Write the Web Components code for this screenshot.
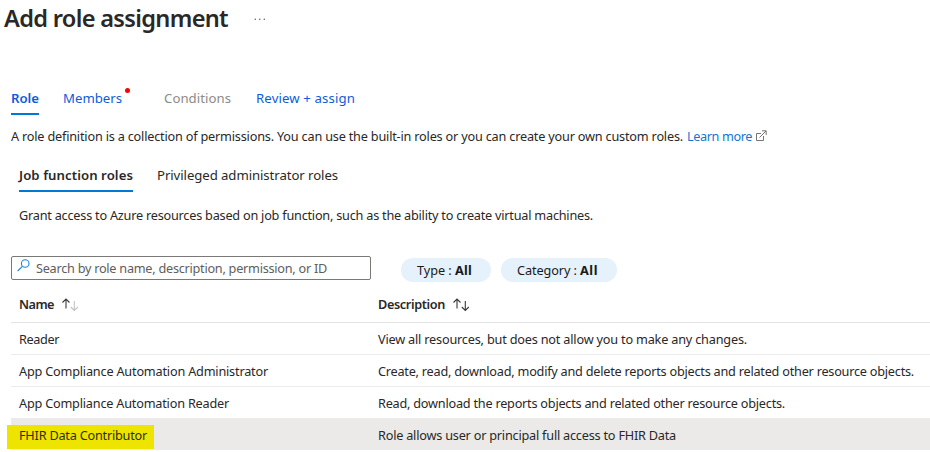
<!DOCTYPE html>
<html lang="en">
<head>
<meta charset="utf-8">
<title>Add role assignment</title>
<style>
html,body{margin:0;background:#fff}
body{width:930px;height:452px;overflow:hidden;font:12.7px/18px "Noto Sans","Open Sans",sans-serif;color:#292827}
</style>
</head>
<body>
<role-page></role-page>
<script>
// Single line of text whose tracking is set so that it spans `w` pixels.
class TextLine extends HTMLElement {
  connectedCallback() {
    if (this.shadowRoot) return;
    this.attachShadow({mode:'open'}).innerHTML =
      '<style>:host{display:inline-block;white-space:pre;flex:none}span{display:inline-block}</style><span><slot></slot></span>';
    const w = +this.getAttribute('w'), s = this.shadowRoot.querySelector('span');
    const n = this.textContent.length;
    if (w) {
      const natural = s.getBoundingClientRect().width;
      s.style.letterSpacing = ((w - natural) / n).toFixed(4) + 'px';
      this.style.width = w + 'px';
    }
  }
}
customElements.define('text-line', TextLine);

class TabItem extends HTMLElement {
  connectedCallback() {
    this.attachShadow({mode:'open'}).innerHTML = `<style>
      :host{display:block;position:relative;box-sizing:border-box;height:26px;color:var(--tab,#0f5bdc);border-bottom:2px solid transparent;font-size:13.2px}
      :host([active]){font-weight:600;border-color:#0078d4}
      :host([disabled]){color:#8d8b89}
      i{display:none}
      :host([dot]) i{display:block;position:absolute;left:62px;top:-1px;width:5px;height:5px;border-radius:50%;background:#f00}
    </style><slot></slot><i></i>`;
  }
}
customElements.define('tab-item', TabItem);

class SortArrows extends HTMLElement {
  connectedCallback() {
    const down = this.hasAttribute('asc') ? '#c4c2c0' : '#3b3a39';
    this.attachShadow({mode:'open'}).innerHTML = `<style>:host{display:block;height:14px}svg{display:block}</style>
      <svg width="17" height="14" viewBox="0 0 17 14" fill="none" stroke-width="1.1">
      <path stroke="#3b3a39" d="M4 10.5V1M.5 4.5L4 1L7.5 4.5"/>
      <path stroke="${down}" d="M12.3 3V12.5M8.8 9L12.3 12.5L15.8 9"/></svg>`;
  }
}
customElements.define('sort-arrows', SortArrows);

class SearchBox extends HTMLElement {
  connectedCallback() {
    this.attachShadow({mode:'open'}).innerHTML = `<style>
      :host{display:flex;box-sizing:border-box;width:360px;height:24px;border:1px solid #7b7977;border-radius:2px;padding:2px 0 0 5px;color:#605e5c;gap:6px}
      svg{flex:none}
    </style><svg width="13" height="14" viewBox="0 0 13 14" fill="none" stroke="#1784d8" stroke-width="1.1"><circle cx="8.2" cy="4.5" r="3.8"/><path d="M5.4 7.3L.6 12"/></svg><slot></slot>`;
  }
}
customElements.define('search-box', SearchBox);

class FilterPill extends HTMLElement {
  connectedCallback() {
    this.attachShadow({mode:'open'}).innerHTML = `<style>
      :host{display:flex;box-sizing:border-box;height:24px;border-radius:12px;background:#e5f1fb;padding:3px 19px 3px 16px;color:#1b1a19}
      ::slotted(b){font-weight:700}
    </style><slot></slot>`;
  }
}
customElements.define('filter-pill', FilterPill);

class RoleRow extends HTMLElement {
  connectedCallback() {
    this.attachShadow({mode:'open'}).innerHTML = `<style>
      :host{display:grid;grid-template-columns:359px 1fr;box-sizing:border-box;height:32px;padding:7px 0 0 8px;border-bottom:1px solid #edebe9;position:relative}
      :host([head]){height:33px;padding-top:5px;font-weight:600;border-color:#e6e4e2}
      :host([selected]){background:#ebeae8;height:31px;border:0}
      div{display:flex;gap:8px;position:relative}
      i{display:none}
      :host([selected]) i{display:block;position:absolute;left:-4px;top:6px;width:147px;height:24px;background:#ede500}
    </style><i></i><div><slot name="name"></slot></div><div><slot name="description"></slot></div>`;
  }
}
customElements.define('role-row', RoleRow);

class RolePage extends HTMLElement {
  connectedCallback() {
    this.attachShadow({mode:'open'}).innerHTML = `<style>
      :host{display:block;height:452px}
      header{display:flex;height:89px;padding-left:4px;box-sizing:border-box;gap:26px}
      h1{margin:2px 0 0;font-size:23.6px;line-height:32px;font-weight:600}
      .more{margin-top:18px}
      nav{display:flex}
      .main{padding-left:11px;height:38px;gap:24px;box-sizing:border-box}
      .main tab-item:nth-child(2){margin-right:18px}
      .main tab-item:nth-child(3){margin-right:1px}
      p{margin:0;display:flex}
      .intro{padding-left:11px;height:39px;gap:4px}
      .intro a{color:#0f78d4}
      .intro svg{margin-top:3px}
      .sub{padding-left:19px;gap:24px;--tab:#292827;height:40px}
      .grant{padding-left:19px;height:50px}
      .filters{display:flex;padding-left:11px;height:39px}
      .filters filter-pill{margin-top:2px}
      .filters filter-pill:nth-child(2){margin-left:30px}
      .filters filter-pill:nth-child(3){margin-left:10px}
      .table{padding-left:11px;margin-top:-5px}
      sort-arrows{margin-top:3px}
      .hl{color:#302f04}
    </style>
    <header><h1><text-line w="224">Add role assignment</text-line></h1>
      <svg class="more" width="12" height="3" fill="#64625f"><circle cx="1.3" cy="1.2" r=".8"/><circle cx="5.8" cy="1.2" r=".8"/><circle cx="10.3" cy="1.2" r=".8"/></svg></header>
    <nav class="main"><tab-item active><text-line w="28">Role</text-line></tab-item><tab-item dot><text-line w="59">Members</text-line></tab-item><tab-item disabled><text-line w="67">Conditions</text-line></tab-item><tab-item><text-line w="99">Review + assign</text-line></tab-item></nav>
    <p class="intro"><text-line w="672">A role definition is a collection of permissions. You can use the built-in roles or you can create your own custom roles.</text-line><a><text-line w="65">Learn more</text-line></a><svg width="11" height="12" fill="none" stroke="#777573"><path d="M5 3.5H.5V10.5H7.5V6M3.5 7.5L10 1M6 .8H10.2V5"/></svg></p>
    <nav class="sub"><tab-item active><text-line w="114">Job function roles</text-line></tab-item><tab-item><text-line w="181">Privileged administrator roles</text-line></tab-item></nav>
    <p class="grant"><text-line w="574">Grant access to Azure resources based on job function, such as the ability to create virtual machines.</text-line></p>
    <div class="filters"><search-box><text-line w="291">Search by role name, description, permission, or ID</text-line></search-box>
      <filter-pill><text-line w="38">Type : </text-line><b><text-line w="17">All</text-line></b></filter-pill>
      <filter-pill><text-line w="63">Category : </text-line><b><text-line w="18">All</text-line></b></filter-pill></div>
    <div class="table">
      <role-row head><text-line slot="name" w="35">Name</text-line><sort-arrows asc slot="name"></sort-arrows><text-line slot="description" w="67">Description</text-line><sort-arrows slot="description"></sort-arrows></role-row>
      <role-row><text-line slot="name" w="40">Reader</text-line><text-line slot="description" w="369">View all resources, but does not allow you to make any changes.</text-line></role-row>
      <role-row><text-line slot="name" w="249">App Compliance Automation Administrator</text-line><text-line slot="description" w="536">Create, read, download, modify and delete reports objects and related other resource objects.</text-line></role-row>
      <role-row><text-line slot="name" w="210">App Compliance Automation Reader</text-line><text-line slot="description" w="407">Read, download the reports objects and related other resource objects.</text-line></role-row>
      <role-row selected><text-line class="hl" slot="name" w="128">FHIR Data Contributor</text-line><text-line slot="description" w="298">Role allows user or principal full access to FHIR Data</text-line></role-row>
    </div>`;
  }
}
customElements.define('role-page', RolePage);
</script>
</body>
</html>
